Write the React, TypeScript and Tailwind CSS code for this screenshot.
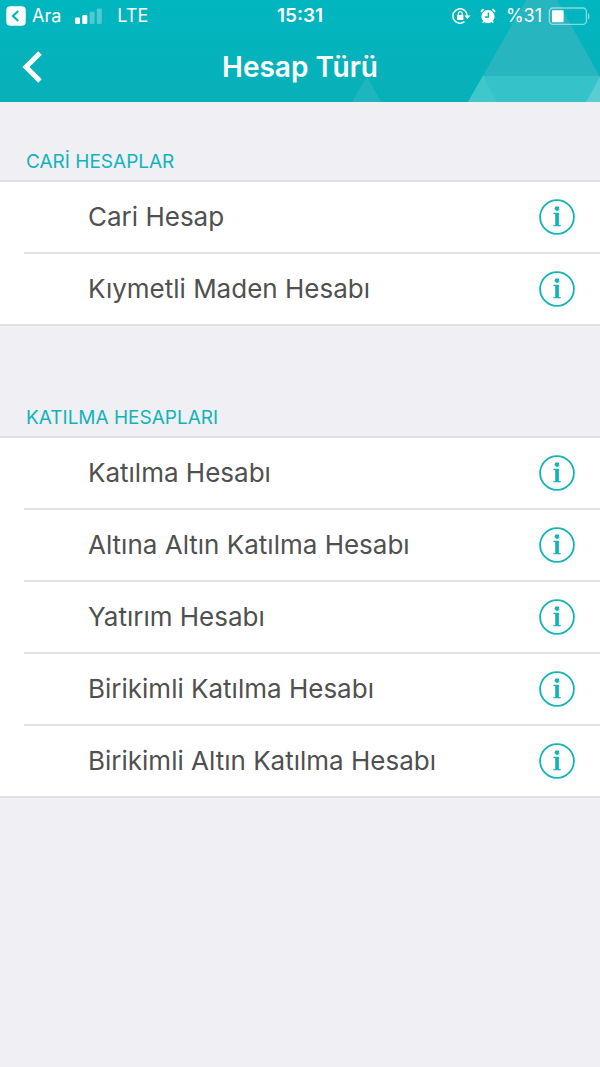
import { ReactNode } from 'react';

interface AccountSection {
  id: string;
  title: string;
  accounts: string[];
}

const sections: AccountSection[] = [
  {
    id: 'cari',
    title: 'CARİ HESAPLAR',
    accounts: ['Cari Hesap', 'Kıymetli Maden Hesabı'],
  },
  {
    id: 'katilma',
    title: 'KATILMA HESAPLARI',
    accounts: [
      'Katılma Hesabı',
      'Altına Altın Katılma Hesabı',
      'Yatırım Hesabı',
      'Birikimli Katılma Hesabı',
      'Birikimli Altın Katılma Hesabı',
    ],
  },
];

function InfoIcon() {
  return (
    <svg className="block h-9 w-9" viewBox="0 0 36 36" fill="none" aria-hidden="true">
      <circle cx="18" cy="18" r="16.9" stroke="#12b3b9" strokeWidth="1.8" />
      <circle cx="18" cy="9.6" r="2.3" fill="#12b3b9" />
      <path d="M14.4 13.8H19.9V26H21.7V27.3H14.4V26H16.2V15.1H14.4Z" fill="#12b3b9" />
    </svg>
  );
}

function StatusBar() {
  return (
    <div className="grid h-8 grid-cols-[1fr_auto_1fr] items-center px-1.5 text-lg text-white">
      <div className="flex items-center">
        <button type="button" className="flex items-center gap-1.5">
          <svg className="h-5 w-5" viewBox="0 0 20 20" fill="none" aria-hidden="true">
            <rect x="0.3" y="0.3" width="19.4" height="19.4" rx="4" fill="white" />
            <path d="M12.2 5L7 10L12.2 15" stroke="#02b5bd" strokeWidth="2.2" />
          </svg>
          Ara
        </button>
        <svg className="ml-3.5 h-4 w-7" viewBox="0 0 28 16" fill="white" aria-hidden="true">
          <rect x="0" y="9.5" width="5" height="6.5" rx="1.2" />
          <rect x="7.3" y="7" width="5" height="9" rx="1.2" />
          <rect x="14.6" y="3.8" width="5" height="12.2" rx="1.2" opacity="0.3" />
          <rect x="21.8" y="0.5" width="5" height="15.5" rx="1.2" opacity="0.3" />
        </svg>
        <span className="ml-3.5">LTE</span>
      </div>
      <time className="text-[19px] font-semibold">15:31</time>
      <div className="mr-1 flex items-center justify-end">
        {/* rotation lock */}
        <svg className="h-4 w-5" viewBox="0 0 20 16" fill="none" stroke="white" aria-hidden="true">
          <path d="M15.3 8A7.2 7.2 0 1 0 12.5 13.7" strokeWidth="1.5" />
          <path d="M12.4 7.5H18.4L15.4 11Z" fill="white" stroke="none" />
          <rect x="5" y="7" width="6.4" height="5" rx="0.6" fill="white" stroke="none" />
          <path d="M6.3 7.4V5.6A1.9 1.9 0 0 1 10.1 5.6V7.4" strokeWidth="1.2" />
        </svg>
        {/* alarm */}
        <svg className="ml-2 h-4 w-4" viewBox="0 0 16 16" fill="none" stroke="white" aria-hidden="true">
          <circle cx="8" cy="8.6" r="6.6" fill="white" stroke="none" />
          <path d="M0.9 3.8L3.6 1.2M15.1 3.8L12.4 1.2" strokeWidth="1.8" />
          <path d="M4 13L2.8 14.8M12 13L13.2 14.8" strokeWidth="1.4" />
          <path d="M8.4 4.6V9H4.9" stroke="#04b2ba" strokeWidth="1.4" />
        </svg>
        <span className="ml-2.5">%31</span>
        <svg className="ml-1.5 h-5 w-[42px]" viewBox="0 0 42 20" fill="none" aria-hidden="true">
          <rect x="1.4" y="2" width="37" height="16.4" rx="3.6" stroke="white" strokeOpacity="0.5" strokeWidth="1.4" />
          <rect x="4" y="4.2" width="11.6" height="12" rx="0.6" fill="white" />
          <path d="M40 7V13.4C42 12.6 42 7.8 40 7Z" fill="white" fillOpacity="0.5" />
        </svg>
      </div>
    </div>
  );
}

function Header({ children }: { children: ReactNode }) {
  return (
    <header className="relative bg-linear-to-b from-[#00b6bf] to-[#08b0b9]">
      <svg
        className="absolute right-0 bottom-0 h-[102px] w-[260px]"
        viewBox="0 0 260 102"
        aria-hidden="true"
      >
        <path d="M12 102L27 76L41 102Z" fill="#1eb5be" />
        <path d="M128 102L186 0H217L260 77V102Z" fill="#27b6c0" />
        <path d="M128 102L143 76H260V102Z" fill="#35c2c9" />
        <path d="M128 102L143 76L157 102Z" fill="#3fc7cc" />
        <path d="M246 102L260 77V102Z" fill="#5bcdd2" />
      </svg>
      <div className="relative">{children}</div>
    </header>
  );
}

export default function App() {
  return (
    <main className="min-h-screen bg-[#efeff4] font-['Inter',sans-serif]">
      <Header>
        <StatusBar />
        <div className="grid h-[70px] grid-cols-[64px_1fr_64px] items-center">
          <button type="button" aria-label="Geri" className="flex h-full items-center pl-5">
            <svg className="h-8 w-6" viewBox="0 0 24 32" fill="none">
              <path d="M20 2L6 16L20 30" stroke="white" strokeWidth="5" />
            </svg>
          </button>
          <h1 className="text-center text-[28px] leading-9 font-semibold text-white">Hesap Türü</h1>
        </div>
      </Header>

      {sections.map((section) => (
        <section key={section.id} className="pb-8">
          <h2 className="px-6.5 pt-12 pb-1.5 text-[19px] leading-6 text-[#12b3b9]">
            {section.title}
          </h2>
          <ul className="border-y-2 border-[#dfdfe3] bg-white">
            {section.accounts.map((account) => (
              <li
                key={account}
                className="ml-6 flex h-18 items-center justify-between border-b-2 border-[#e2e2e4] pr-[25px] pl-16 last:h-[70px] last:border-b-0"
              >
                <span className="text-[26px] leading-8 text-[#505050]">{account}</span>
                <button type="button" aria-label={`${account} hakkında bilgi`}>
                  <InfoIcon />
                </button>
              </li>
            ))}
          </ul>
        </section>
      ))}
    </main>
  );
}
